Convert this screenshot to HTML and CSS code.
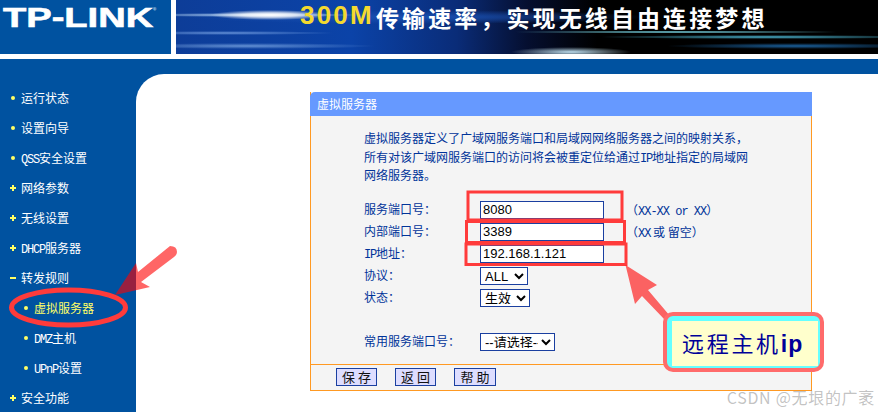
FILE: index.html
```html
<!DOCTYPE html>
<html lang="zh">
<head>
<meta charset="utf-8">
<title>虚拟服务器</title>
<link rel="stylesheet" href="styles.css">
</head>
<body>
<div class="page">
  <header class="top">
    <div class="logo"><span class="logo-text">TP-LINK</span><span class="logo-reg">®</span></div>
    <div class="banner"><span class="slogan-num">300M</span><span class="slogan">传输速率，实现无线自由连接梦想</span></div>
  </header>
  <div class="content">
    <nav class="side">
      <div class="item dot">运行状态</div>
      <div class="item dot">设置向导</div>
      <div class="item dot"><span class="lat">QSS</span>安全设置</div>
      <div class="item plus">网络参数</div>
      <div class="item plus">无线设置</div>
      <div class="item plus"><span class="lat">DHCP</span>服务器</div>
      <div class="item minus">转发规则</div>
      <div class="item sub current">虚拟服务器</div>
      <div class="item sub"><span class="lat">DMZ</span>主机</div>
      <div class="item sub"><span class="lat">UPnP</span>设置</div>
      <div class="item plus">安全功能</div>
    </nav>
    <main class="main">
      <section class="card">
        <h1 class="card-title">虚拟服务器</h1>
        <div class="card-body">
          <p class="intro">虚拟服务器定义了广域网服务端口和局域网网络服务器之间的映射关系，<br>所有对该广域网服务端口的访问将会被重定位给通过<span class="lat">IP</span>地址指定的局域网<br>网络服务器。</p>
          <div class="form">
            <label class="lbl">服务端口号：</label><input class="field" value="8080"><span class="hint">（<span class="lat wide">XX-XX or XX</span>）</span>
            <label class="lbl">内部端口号：</label><input class="field" value="3389"><span class="hint">（<span class="lat wide">XX</span> 或 留空）</span>
            <label class="lbl"><span class="lat">IP</span>地址：</label><input class="field" value="192.168.1.121"><span></span>
            <label class="lbl">协议：</label><div><select class="sel sel-all"><option>ALL</option></select></div><span></span>
            <label class="lbl">状态：</label><div><select class="sel sel-state"><option>生效</option></select></div><span></span>
          </div>
          <div class="form common">
            <label class="lbl">常用服务端口号：</label><div><select class="sel sel-common"><option>--请选择--</option></select></div>
          </div>
        </div>
        <div class="card-foot">
          <button class="btn">保 存</button>
          <button class="btn">返 回</button>
          <button class="btn">帮 助</button>
        </div>
      </section>
    </main>
  </div>

  <svg class="marks" width="878" height="412" viewBox="0 0 878 412" aria-hidden="true">
    <path class="arrow" d="M170 246 Q177 246 177 252 Q177 255 174 257 L141 282 L150 287 L115 295 L136 263 L138 272 Z"/>
    <ellipse class="ring" cx="68.5" cy="307.5" rx="57" ry="17.5"/>
    <rect class="box" x="468" y="192" width="154" height="28"/>
    <rect class="box" x="466.5" y="221.5" width="158" height="21"/>
    <rect class="box" x="466" y="244" width="160" height="20.5"/>
    <path class="arrow" d="M625.5 265 L657 285 L648 290 L670 316 L665 320 L642 296 L635 304 Z"/>
  </svg>
  <div class="callout"><div class="callout-in">远程主机<b>ip</b></div></div>
  <div class="mark-text">CSDN @无垠的广袤</div>
</div>
</body>
</html>
```
FILE: styles.css
```css
* { box-sizing: border-box; }
html, body { margin: 0; padding: 0; }
body {
  font-family: "Noto Sans CJK SC", "Liberation Sans", sans-serif;
  font-size: 12px;
  background: #fff;
}
.page {
  position: relative;
  width: 878px;
  height: 412px;
  overflow: hidden;
  display: flex;
  flex-direction: column;
}
.lat {
  font-family: "Liberation Mono", monospace;
  font-size: 12px;
  line-height: 0;
  letter-spacing: -1.2px;
}
.lat.wide { letter-spacing: -1px; }

/* header */
.top {
  display: flex;
  gap: 5px;
  height: 54px;
  margin-bottom: 5px;
  flex: none;
}
.logo {
  width: 171px;
  background: #0052a0;
  color: #fff;
  padding: 0 0 0 3px;
  display: flex;
  align-items: flex-start;
  position: relative;
}
.logo-text {
  display: block;
  font-family: "Liberation Sans", sans-serif;
  font-weight: 700;
  font-size: 27px;
  line-height: 36px;
  -webkit-text-stroke: .6px #fff;
  transform: scaleX(1.41);
  transform-origin: left top;
}
.logo-reg {
  position: absolute;
  left: 153px;
  top: 5px;
  font-size: 7px;
  line-height: 10px;
  color: #cfe0f0;
}
.banner {
  flex: 1;
  display: flex;
  align-items: flex-start;
  padding: 0 0 0 124px;
  color: #fff;
  font-weight: 700;
  background:
    radial-gradient(ellipse 60px 5px at 94px 15px, #fff 0, rgba(255,255,255,.75) 45%, rgba(255,255,255,0) 100%),
    radial-gradient(ellipse 120px 2px at 70px 15px, rgba(200,230,255,.9) 0, rgba(200,230,255,0) 100%),
    radial-gradient(ellipse 110px 2px at 50px 33px, rgba(160,200,255,.6) 0, rgba(160,200,255,0) 100%),
    radial-gradient(ellipse 130px 3px at 70px 46px, rgba(170,210,255,.55) 0, rgba(170,210,255,0) 100%),
    radial-gradient(ellipse 60px 5px at 395px 52px, #bcdcec 0, rgba(188,220,236,0) 100%),
    radial-gradient(ellipse 170px 1.5px at 500px 32px, #7fe0f0 0, rgba(127,224,240,0) 100%),
    radial-gradient(ellipse 170px 2px at 590px 37px, #4bb4d0 0, rgba(75,180,208,0) 100%),
    radial-gradient(ellipse 130px 3px at 620px 46px, #1a5f9a 0, rgba(26,95,154,0) 100%),
    radial-gradient(ellipse 230px 7px at 240px 17px, #1a50b0 0, rgba(26,80,176,0) 100%),
    linear-gradient(90deg, #0d3d98 0, #0b43a8 25%, #0a2c78 40%, #050f30 50%, #000 60%, #000 100%);
}
.slogan-num {
  color: #f4d92e;
  font-family: "Liberation Sans", sans-serif;
  font-size: 26px;
  line-height: 30px;
  letter-spacing: 2.2px;
  width: 76px;
  flex: none;
}
.slogan {
  font-size: 23px;
  line-height: 34px;
  letter-spacing: 3.1px;
  white-space: nowrap;
}

/* content */
.content {
  flex: 1;
  display: flex;
  min-height: 0;
  background: #0052a0;
}
.side {
  width: 136px;
  flex: none;
  padding-top: 24px;
  color: #fff;
}
.item {
  position: relative;
  height: 30px;
  line-height: 30px;
  padding-left: 21px;
  white-space: nowrap;
}
.item::before {
  content: "";
  position: absolute;
  background: #ffff66;
}
.dot::before { left: 11px; top: 13px; width: 4px; height: 4px; border-radius: 50%; }
.plus::before { left: 10px; top: 14px; width: 6px; height: 2px; }
.plus::after {
  content: "";
  position: absolute;
  left: 12px; top: 12px; width: 2px; height: 6px;
  background: #ffff66;
}
.minus::before { left: 10px; top: 14px; width: 6px; height: 2px; }
.sub { padding-left: 34px; }
.sub::before { left: 24px; top: 13px; width: 4px; height: 4px; border-radius: 50%; }
.current { color: #ffff66; }

.main {
  flex: 1;
  margin-top: 15px;
  background: #fff;
  border-top-left-radius: 28px;
  padding: 18px 66px 0 174px;
  min-width: 0;
}
.card {
  display: flex;
  flex-direction: column;
  height: 299px;
  background: #f4f4f4;
  border: 1px solid #ff9922;
  border-top: 0;
}
.card-title {
  margin: 0 -1px;
  height: 24px;
  padding-left: 7px;
  font-size: 12px;
  font-weight: 400;
  line-height: 24px;
  color: #fff;
  background: #6699ff;
  border-top-left-radius: 5px;
}
.card-body {
  flex: 1;
  padding: 13px 0 0 53px;
  color: #003399;
}
.intro {
  margin: 0 0 16.5px;
  line-height: 18.5px;
}
.form {
  display: grid;
  grid-template-columns: 116px 124px auto;
  grid-auto-rows: 18px;
  row-gap: 4px;
  align-items: center;
  justify-content: start;
}
.common {
  grid-template-columns: 116px auto;
  margin-top: 26px;
}
.lbl { line-height: 16px; align-self: start; }
.field {
  width: 124px;
  height: 18px;
  padding: 0 2px 2px;
  border: 1px solid #1a3fa0;
  background: #fff;
  color: #000;
  font-family: "Liberation Sans", sans-serif;
  font-size: 13px;
  border-radius: 0;
  outline: 0;
}
.hint {
  align-self: start;
  line-height: 18px;
  padding-left: 22px;
  white-space: nowrap;
}
.sel {
  display: block;
  height: 18px;
  padding: 0 0 2px;
  border: 1px solid #1a3fa0;
  border-radius: 0;
  background-color: #fff;
  color: #000;
  font-family: "Liberation Sans", "Noto Sans CJK SC", sans-serif;
  font-size: 13px;
}
.sel-all { width: 48px; }
.sel-state { width: 50px; }
.sel-common { width: 75px; }
.card-foot {
  display: flex;
  gap: 18px;
  height: 26px;
  padding: 3px 0 0 25px;
  border-top: 1px solid #ff9922;
}
.btn {
  width: 41px;
  height: 18px;
  padding: 0;
  border: 1px solid #1a3fa0;
  border-radius: 0;
  background: #ddddff;
  color: #111;
  font-family: "Noto Sans CJK SC", sans-serif;
  font-size: 13px;
  line-height: 16px;
}
.btn:last-child { width: 42px; }

/* annotations */
.marks {
  position: absolute;
  left: 0;
  top: 0;
  pointer-events: none;
}
.arrow { fill: rgba(255, 0, 0, .6); }
.ring { fill: none; stroke: #ff3b3b; stroke-width: 5; }
.box { fill: none; stroke: #ff3b3b; stroke-width: 3; }
.callout {
  position: absolute;
  left: 663px;
  top: 312px;
  width: 161px;
  height: 60px;
  padding: 5px 2px 2px 5px;
  background: #66ffff;
  border: 4px solid #ff6b6b;
  border-radius: 10px;
}
.callout-in {
  height: 100%;
  background: #ffffcc;
  padding-left: 10px;
  color: #000099;
  font-size: 22px;
  letter-spacing: 2.7px;
  line-height: 42px;
  white-space: nowrap;
}
.callout-in b {
  font-family: "Liberation Sans", sans-serif;
  font-weight: 700;
  font-size: 23px;
  letter-spacing: 1px;
}
.mark-text {
  position: absolute;
  right: 3px;
  top: 387px;
  color: rgba(120, 120, 120, .45);
  font-size: 16px;
  line-height: 20px;
  letter-spacing: .7px;
  white-space: nowrap;
}
```
